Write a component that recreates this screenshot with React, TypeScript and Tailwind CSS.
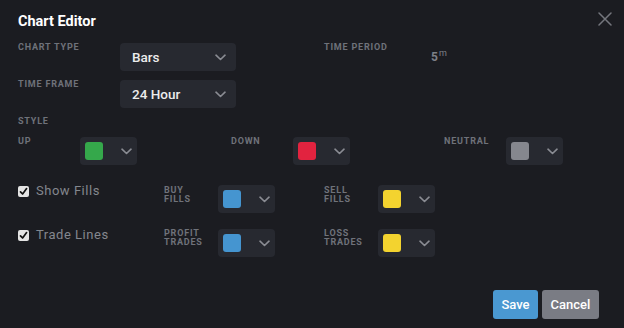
import React from "react";

const Chevron = ({ className = "" }: { className?: string }) => (
  <svg width="11" height="7" viewBox="0 0 11 7" className={className} fill="none">
    <path d="M1 1.2 L5.5 5.5 L10 1.2" stroke="#8a8c93" strokeWidth="1.6" strokeLinecap="round" strokeLinejoin="round" />
  </svg>
);

const Label = ({ children, className = "" }: { children: React.ReactNode; className?: string }) => (
  <div className={`text-[9px] leading-[9px] font-bold tracking-[0.09em] text-[#6f727a] uppercase ${className}`}>{children}</div>
);

const Select = ({ value }: { value: string }) => (
  <div className="w-[116px] h-[28px] rounded-[4px] bg-[#272930] flex items-center justify-between pl-[12px] pr-[10px]">
    <span className="text-[13.5px] text-[#ececec] font-medium">{value}</span>
    <Chevron />
  </div>
);

const Swatch = ({ color }: { color: string }) => (
  <div className="w-[57px] h-[28px] rounded-[4px] bg-[#272930] flex items-center justify-between pl-[5px] pr-[5px]">
    <div className={`w-[18px] h-[18px] rounded-[3px] ${color}`} />
    <Chevron />
  </div>
);

const Check = ({ label }: { label: string }) => (
  <div className="w-[146px] flex items-start gap-[7px]">
    <div className="mt-[1px] w-[11px] h-[11px] rounded-[2px] bg-[#e4e4e4] flex items-center justify-center">
      <svg width="9" height="9" viewBox="0 0 9 9" fill="none">
        <path d="M1.5 4.8 L3.6 7 L7.6 1.6" stroke="#111" strokeWidth="1.7" strokeLinecap="round" strokeLinejoin="round" />
      </svg>
    </div>
    <span className="-mt-[1px] text-[13px] leading-[13px] tracking-[0.04em] text-[#84878e]">{label}</span>
  </div>
);

export default function App() {
  return (
    <div className="w-[624px] h-[328px] bg-[#1b1c21] relative overflow-hidden font-['Roboto',sans-serif]">
      <button className="absolute top-[11px] right-[12px] w-[15px] h-[15px] flex items-center justify-center">
        <svg width="14" height="14" viewBox="0 0 14 14" fill="none">
          <path d="M1 1 L13 13 M13 1 L1 13" stroke="#74767d" strokeWidth="1.5" strokeLinecap="round" />
        </svg>
      </button>
      <div className="pt-[13px] pl-[18px] pr-[25px] flex flex-col">
        <h1 className="text-[14.5px] leading-[18px] font-bold text-white">Chart Editor</h1>
        <div className="mt-[12px] flex items-start">
          <Label className="w-[102px]">Chart Type</Label>
          <Select value="Bars" />
          <Label className="ml-[88px] w-[107px]">Time Period</Label>
          <div className="mt-[8px] text-[12px] leading-[12px] font-bold text-[#7d8087]">
            5<sup className="text-[9px] font-normal relative -top-[5px] ml-[1px]">m</sup>
          </div>
        </div>
        <div className="mt-[9px] flex items-start">
          <Label className="w-[102px]">Time Frame</Label>
          <Select value="24 Hour" />
        </div>
        <Label className="mt-[9px]">Style</Label>
        <div className="mt-[11px] flex items-start">
          <div className="w-[213px] flex items-start">
            <Label className="w-[62px]">Up</Label>
            <Swatch color="bg-[#35a84b]" />
          </div>
          <div className="w-[213px] flex items-start">
            <Label className="w-[62px]">Down</Label>
            <Swatch color="bg-[#e2233f]" />
          </div>
          <div className="flex items-start">
            <Label className="w-[62px]">Neutral</Label>
            <Swatch color="bg-[#85878e]" />
          </div>
        </div>
        <div className="mt-[20px] flex items-start">
          <Check label="Show Fills" />
          <Label className="w-[54px] pt-[1px]">Buy<br />Fills</Label>
          <Swatch color="bg-[#4595d0]" />
          <Label className="ml-[49px] w-[54px] pt-[1px]">Sell<br />Fills</Label>
          <Swatch color="bg-[#f3d32f]" />
        </div>
        <div className="mt-[16px] flex items-start">
          <Check label="Trade Lines" />
          <Label className="w-[54px]">Profit<br />Trades</Label>
          <Swatch color="bg-[#4595d0]" />
          <Label className="ml-[49px] w-[54px]">Loss<br />Trades</Label>
          <Swatch color="bg-[#f3d32f]" />
        </div>
        <div className="mt-[33px] flex justify-end gap-[4px]">
          <button className="w-[45px] h-[29px] rounded-[3px] bg-[#4a98d1] text-[13px] font-medium text-white">Save</button>
          <button className="w-[57px] h-[29px] rounded-[3px] bg-[#7a7c84] text-[13px] font-medium text-white">Cancel</button>
        </div>
      </div>
    </div>
  );
}
